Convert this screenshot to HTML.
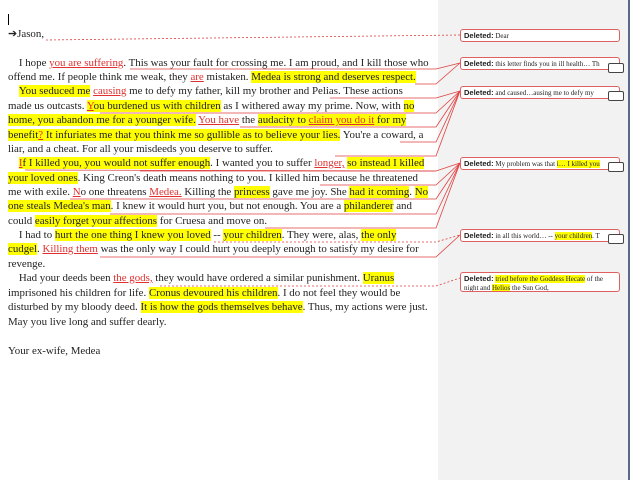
<!DOCTYPE html>
<html><head><style>
body{margin:0;width:640px;height:480px;background:#fff;position:relative;overflow:hidden;font-family:"Liberation Serif",serif;font-size:10.9px;color:#222}
.l{position:absolute;left:8px;white-space:nowrap;line-height:13px}
.h{background:#ffff00}
.r{color:#e03030;text-decoration:underline}
.panel{position:absolute;left:438px;top:0;width:190px;height:480px;background:#f2f2f2}
.bar{position:absolute;left:628px;top:0;width:2px;height:480px;background:#5a6a85}
.b{position:absolute;left:460px;width:160px;border:1px solid #e06060;border-radius:3px;background:#fff;font-size:7px;line-height:9px;padding:1px 3px;box-sizing:border-box;overflow:hidden;white-space:nowrap}
.b b{font-family:"Liberation Sans",sans-serif;font-size:7.5px}
.m{position:absolute;left:608px;width:14px;height:8px;border:1px solid #444;background:#fff;border-radius:2px}
</style></head><body>
<div class="panel"></div><div class="bar"></div>
<div style="position:absolute;left:8px;top:14px;width:1px;height:11px;background:#000"></div>
<svg style="position:absolute;left:0;top:0" width="640" height="480">
<g stroke="#e04040" stroke-width="0.8" fill="none">
<line x1="46" y1="40" x2="460" y2="35" stroke-dasharray="2,2"/>
<polyline points="130,69 436,69 460,63"/><polyline points="415,84 436,84 460,63"/>
<polyline points="330,98 436,98 460,91"/><polyline points="100,113 436,113 460,91"/>
<polyline points="240,127 436,127 460,91"/><polyline points="400,142 436,142 460,91"/>
<polyline points="335,156 436,156 460,91"/><polyline points="140,171 436,171 460,163"/>
<polyline points="25,170 436,171"/><polyline points="320,185 436,185 460,163"/>
<polyline points="70,199 436,199 460,163"/><polyline points="110,214 436,214 460,163"/>
<polyline points="265,228 436,228 460,163"/>
<polyline points="214,242 436,242 460,235" stroke-dasharray="2,2"/>
<polyline points="100,257 436,257 460,235"/>
<polyline points="160,286 436,286 460,278" stroke-dasharray="2,2"/>
</g></svg>
<div class="l" style="top:28px">➔Jason,</div>
<div class="l" style="top:57px">&nbsp;&nbsp;&nbsp;&nbsp;I hope <span class="r">you are suffering</span>. This was your fault for crossing me. I am proud, and I kill those who</div>
<div class="l" style="top:71px">offend me. If people think me weak, they <span class="r">are</span> mistaken. <span class="h">Medea is strong and deserves respect.</span></div>
<div class="l" style="top:85px">&nbsp;&nbsp;&nbsp;&nbsp;<span class="h">You seduced me</span> <span class="r">causing</span> me to defy my father, kill my brother and Pelias. These actions</div>
<div class="l" style="top:100px">made us outcasts. <span class="h"><span class="r">Y</span>ou burdened us with children</span> as I withered away my prime. Now, with <span class="h">no</span></div>
<div class="l" style="top:114px"><span class="h">home, you abandon me for a younger wife.</span> <span class="r">You have</span> the <span class="h">audacity to <span class="r">claim you do it</span> for my</span></div>
<div class="l" style="top:129px"><span class="h">benefit<span class="r">?</span> It infuriates me that you think me so gullible as to believe your lies.</span> You're a coward, a</div>
<div class="l" style="top:143px">liar, and a cheat. For all your misdeeds you deserve to suffer.</div>
<div class="l" style="top:157px">&nbsp;&nbsp;&nbsp;&nbsp;<span class="h"><span class="r">I</span>f I killed you, you would not suffer enough</span>. I wanted you to suffer <span class="r">longer,</span> <span class="h">so instead I killed</span></div>
<div class="l" style="top:172px"><span class="h">your loved ones</span>. King Creon's death means nothing to you. I killed him because he threatened</div>
<div class="l" style="top:186px">me with exile. <span class="r">N</span>o one threatens <span class="r">Medea.</span> Killing the <span class="h">princess</span> gave me joy. She <span class="h">had it coming</span>. <span class="h">No</span></div>
<div class="l" style="top:200px"><span class="h">one steals Medea's man</span>. I knew it would hurt you, but not enough. You are a <span class="h">philanderer</span> and</div>
<div class="l" style="top:215px">could <span class="h">easily forget your affections</span> for Cruesa and move on.</div>
<div class="l" style="top:229px">&nbsp;&nbsp;&nbsp;&nbsp;I had to <span class="h">hurt the one thing I knew you loved</span> -- <span class="h">your children</span>. They were, alas, <span class="h">the only</span></div>
<div class="l" style="top:243px"><span class="h">cudgel</span>. <span class="r">Killing them</span> was the only way I could hurt you deeply enough to satisfy my desire for</div>
<div class="l" style="top:258px">revenge.</div>
<div class="l" style="top:272px">&nbsp;&nbsp;&nbsp;&nbsp;Had your deeds been <span class="r">the gods,</span> they would have ordered a similar punishment. <span class="h">Uranus</span></div>
<div class="l" style="top:287px">imprisoned his children for life. <span class="h">Cronus devoured his children</span>. I do not feel they would be</div>
<div class="l" style="top:301px">disturbed by my bloody deed. <span class="h">It is how the gods themselves behave</span>. Thus, my actions were just.</div>
<div class="l" style="top:316px">May you live long and suffer dearly.</div>
<div class="l" style="top:345px">Your ex-wife, Medea</div>
<div class="b" style="top:29px;height:13px"><b>Deleted:</b> Dear</div>
<div class="b" style="top:57px;height:13px"><b>Deleted:</b> this letter finds you in ill health… Th</div><div class="m" style="top:63px"></div>
<div class="b" style="top:86px;height:13px"><b>Deleted:</b> and caused…ausing me to defy my</div><div class="m" style="top:91px"></div>
<div class="b" style="top:157px;height:13px"><b>Deleted:</b> My problem was that <span class="h">i… I killed you</span></div><div class="m" style="top:162px"></div>
<div class="b" style="top:229px;height:13px"><b>Deleted:</b> in all this world… -- <span class="h">your children</span>. T</div><div class="m" style="top:234px"></div>
<div class="b" style="top:272px;height:20px;white-space:normal"><b>Deleted:</b> <span class="h">tried before the Goddess Hecate</span> of the night and <span class="h">Helios</span> the Sun God,</div>
</body></html>
